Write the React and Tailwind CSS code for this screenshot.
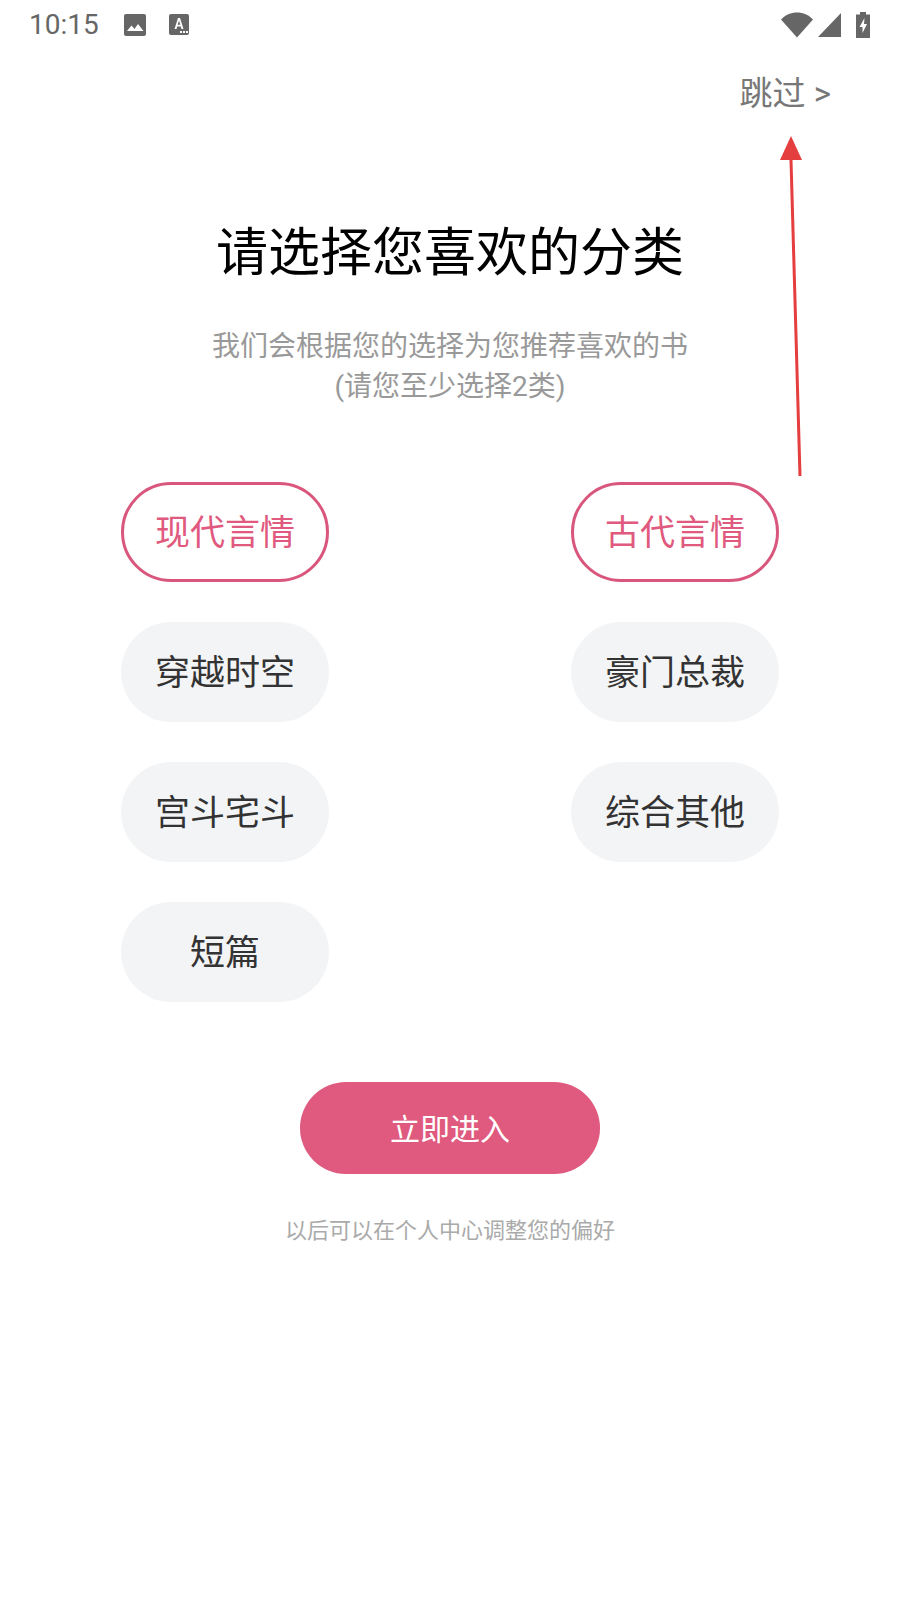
import React from 'react';

const CATEGORIES = [
  { name: '现代言情', selected: true },
  { name: '古代言情', selected: true },
  { name: '穿越时空' },
  { name: '豪门总裁' },
  { name: '宫斗宅斗' },
  { name: '综合其他' },
  { name: '短篇' },
];

const StatusBar = () => (
  <div className="flex h-[48px] items-center justify-between pl-[29px] pr-[30px] pt-[1px] text-[#666666]">
    <div className="flex items-center">
      <span className="text-[28px] leading-none">10:15</span>
      <svg className="ml-[24px]" width="24" height="24" viewBox="0 0 24 24" fill="#666666">
        <rect x="1" y="1" width="22" height="22" rx="2" />
        <path d="M4 18l4.500-5.500 3 3.500 3.500-5 5.500 7z" fill="#ffffff" />
      </svg>
      <svg className="ml-[22px]" width="20" height="22" viewBox="0 0 20 22" fill="#666666">
        <rect x="0" y="0" width="20" height="21" rx="2" />
        <path d="M5.500 15L9 4h2l3.500 11h-2l-.7-2.500H8.200L7.500 15zM8.700 10.800h2.600L10 6.500z" fill="#ffffff" />
        <rect x="11" y="17" width="2" height="2" fill="#ffffff" />
        <rect x="14" y="17" width="2" height="2" fill="#ffffff" />
        <rect x="17" y="17" width="2" height="2" fill="#ffffff" />
      </svg>
    </div>
    <div className="flex items-center">
      <svg width="32" height="26" viewBox="0 0 34 26" preserveAspectRatio="none" fill="#666666">
        <path d="M0 7.500C4.500 3 10.500 0.500 17 0.500S29.500 3 34 7.500L17 25.500z" />
      </svg>
      <svg className="ml-[5px]" width="23" height="24" viewBox="0 0 24 24" preserveAspectRatio="none" fill="#666666">
        <path d="M0 24L24 0v24z" />
      </svg>
      <svg className="ml-[15px]" width="14" height="26" viewBox="0 0 14 26" fill="#666666">
        <path d="M4 0h6v2.500h4V26H0V2.500h4z" />
        <path d="M8.500 6L3.500 15h3v6l4.500-9H8z" fill="#ffffff" />
      </svg>
    </div>
  </div>
);

const CategoryChip = ({ name, selected }) => (
  <button
    className={`flex h-[100px] w-[208px] items-center justify-center rounded-full pt-[5px] text-[35px] ${
      selected
        ? 'border-[3px] border-[#d9577c] bg-white text-[#df5a7e]'
        : 'bg-[#f3f4f6] text-[#333333]'
    }`}
  >
    {name}
  </button>
);

export default function App() {
  return (
    <div
      className="relative h-[1600px] w-[900px] overflow-hidden bg-white"
      style={{ fontFamily: 'Roboto, "Noto Sans CJK SC", sans-serif' }}
    >
      <StatusBar />

      {/* Skip */}
      <div className="mt-[24px] flex justify-end pr-[69px] text-[33px] leading-[44px] text-[#777777]">
        跳过 &gt;
      </div>

      {/* Annotation arrow */}
      <svg className="absolute left-[770px] top-[130px]" width="40" height="350" viewBox="0 0 40 350">
        <line x1="21" y1="30" x2="30" y2="346" stroke="#e53e3e" strokeWidth="3" />
        <path d="M21 6L32 30H10z" fill="#e53e3e" />
      </svg>

      <h1 className="mt-[102px] text-center text-[52px] font-normal leading-[72px] text-black">
        请选择您喜欢的分类
      </h1>

      <p className="mt-[37px] text-center text-[28px] leading-[40px] text-[#999999]">
        我们会根据您的选择为您推荐喜欢的书
        <br />
        (请您至少选择2类)
      </p>

      <div className="mt-[75px] grid grid-cols-[208px_208px] justify-between gap-y-[40px] pl-[121px] pr-[121px]">
        {CATEGORIES.map((c) => (
          <CategoryChip key={c.name} name={c.name} selected={c.selected} />
        ))}
      </div>

      <div className="mt-[80px] flex justify-center">
        <button className="h-[92px] w-[300px] rounded-full bg-[#e0597e] pt-[2px] text-[30px] text-white">
          立即进入
        </button>
      </div>

      <p className="mt-[41px] text-center text-[22px] leading-[32px] text-[#aaaaaa]">
        以后可以在个人中心调整您的偏好
      </p>
    </div>
  );
}
